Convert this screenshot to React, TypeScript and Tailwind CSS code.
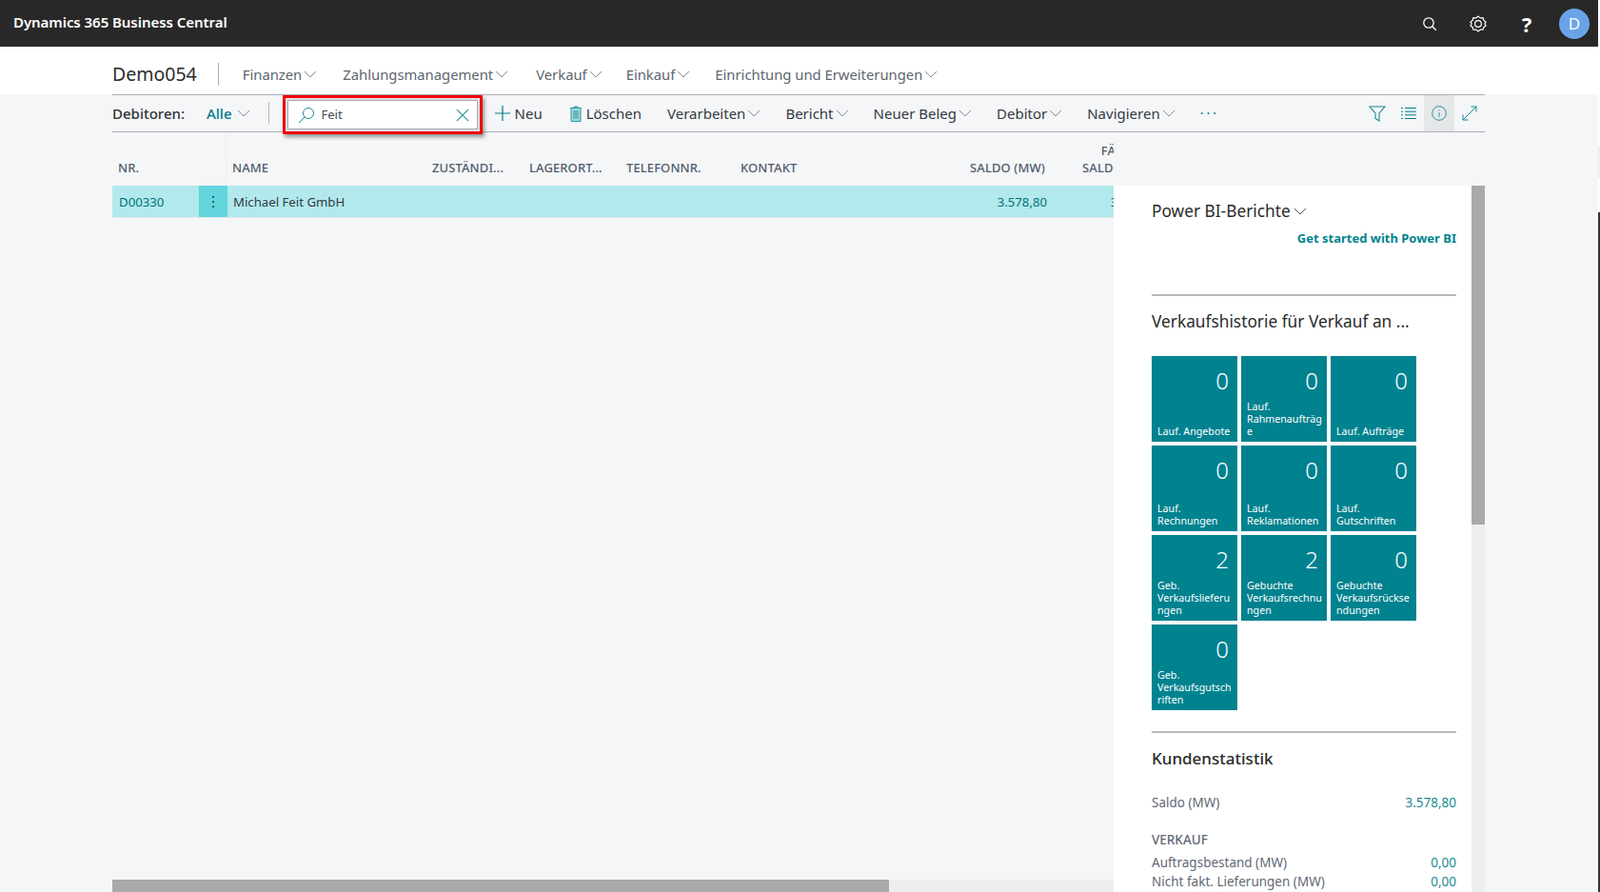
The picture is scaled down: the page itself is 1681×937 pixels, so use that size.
import React from 'react'

const Caret = ({ className = 'text-[#8a8f96]', ml = 'ml-[2px]' }: { className?: string; ml?: string }) => (
  <svg width="14" height="8" viewBox="0 0 14 8" className={`shrink-0 ${ml} ${className}`} fill="none" stroke="currentColor" strokeWidth="1">
    <path d="M1 1l6 6 6-6" />
  </svg>
)

const navItems = [
  { label: 'Finanzen', ml: 'ml-[25px]' },
  { label: 'Zahlungsmanagement', ml: 'ml-[27px]' },
  { label: 'Verkauf', ml: 'ml-[29px]' },
  { label: 'Einkauf', ml: 'ml-[25px]' },
  { label: 'Einrichtung und Erweiterungen', ml: 'ml-[26px]' },
]

const actions = [
  { label: 'Verarbeiten', ml: 'ml-[27px]' },
  { label: 'Bericht', ml: 'ml-[26px]' },
  { label: 'Neuer Beleg', ml: 'ml-[26px]' },
  { label: 'Debitor', ml: 'ml-[26px]' },
  { label: 'Navigieren', ml: 'ml-[26px]' },
]

const tiles = [
  { value: '0', label: 'Lauf. Angebote' },
  { value: '0', label: 'Lauf.\nRahmenaufträg\ne' },
  { value: '0', label: 'Lauf. Aufträge' },
  { value: '0', label: 'Lauf.\nRechnungen' },
  { value: '0', label: 'Lauf.\nReklamationen' },
  { value: '0', label: 'Lauf.\nGutschriften' },
  { value: '2', label: 'Geb.\nVerkaufslieferu\nngen' },
  { value: '2', label: 'Gebuchte\nVerkaufsrechnu\nngen' },
  { value: '0', label: 'Gebuchte\nVerkaufsrückse\nndungen' },
  { value: '0', label: 'Geb.\nVerkaufsgutsch\nriften' },
]

const columns = [
  { label: 'NR.', width: 'flex h-[56px] w-[120px] -mb-[10px] items-end border-r border-[#eceef0] pb-[10px] pl-[6px]' },
  { label: 'NAME', width: 'w-[216px] pl-[6px]' },
  { label: 'ZUSTÄNDI...', width: 'w-[102px]' },
  { label: 'LAGERORT...', width: 'w-[102px]' },
  { label: 'TELEFONNR.', width: 'w-[120px]' },
  { label: 'KONTAKT', width: 'w-[194px]' },
]

function Stat({ label, value, className = '' }: { label: string; value: string; className?: string }) {
  return (
    <div className={`flex justify-between text-[13.5px] leading-[20px] ${className}`}>
      <span className="text-[#5f6875]">{label}</span>
      <span className="text-[#1a8a92]">{value}</span>
    </div>
  )
}

export default function App() {
  return (
    <div className="flex h-[937px] w-[1681px] overflow-hidden bg-white font-['Open_Sans',sans-serif]">
      <div className="flex h-full w-[1679px] flex-col">
        {/* top bar */}
        <header className="flex h-[49px] shrink-0 items-center bg-[#282828] pl-[14px] pr-[9px] text-white">
          <span className="-mt-[2px] text-[15px] font-semibold tracking-[-0.05px]">Dynamics 365 Business Central</span>
          <svg width="16" height="16" viewBox="0 0 16 16" className="ml-auto" fill="none" stroke="currentColor" strokeWidth="1.3">
            <circle cx="7" cy="7" r="5.2" />
            <path d="M10.8 10.8l4 4" />
          </svg>
          <svg width="18" height="18" viewBox="0 0 24 24" className="ml-[34px]" fill="none" stroke="currentColor" strokeWidth="1.6">
            <path d="M12 1.500l3 2.400 3.800-.4 1 3.700 3 2.300-1.600 2.500 1.600 2.500-3 2.400-1 3.400-3.800-.3-3 2.500-3-2.500-3.800.3-1-3.400-3-2.400 1.600-2.500-1.600-2.500 3-2.300 1-3.700 3.800.4z" />
            <circle cx="12" cy="12" r="4.500" />
          </svg>
          <span className="ml-[36px] w-[12px] text-center text-[22px] font-bold leading-none">?</span>
          <span className="ml-[28px] flex h-[32px] w-[32px] items-center justify-center rounded-full bg-[#6ba3e8] text-[17px]">D</span>
        </header>

        {/* company and menus */}
        <nav className="flex h-[50px] shrink-0 items-center bg-white pl-[118px] pt-[8px] text-[14.8px] text-[#5e6570]">
          <span className="text-[19.5px] leading-none text-[#2b2b2b]">Demo054</span>
          <span className="ml-[22px] h-[24px] w-px bg-[#a9adb3]" />
          {navItems.map((item) => (
            <span key={item.label} className={`flex items-center ${item.ml}`}>
              {item.label}
              <Caret />
            </span>
          ))}
        </nav>

        <main className="flex min-h-0 flex-1 flex-col bg-[#f5f6f8] pl-[118px]">
          {/* action bar */}
          <div className="flex h-[40px] w-[1442px] shrink-0 items-center border-y border-[#a9adb5] text-[15px] text-[#333a42]">
            <span className="font-medium text-[#2f3338]">Debitoren:</span>
            <span className="ml-[23px] font-medium text-[#007c86]">Alle</span>
            <Caret ml="ml-[5px]" />
            <span className="ml-[19px] h-[24px] w-px bg-[#b5b9bf]" />
            <div className="z-10 ml-[14px] box-border h-[41px] w-[210px] self-start border-[3px] border-[#f00000] bg-[#eef0f2] p-[2px] shadow-[2px_3px_4px_rgba(0,0,0,0.4)]">
              <div className="flex h-[31px] items-center border border-[#a8adb5] bg-white pl-[10px] pr-[8px] shadow-[0_0_3px_rgba(0,0,0,0.25)]">
                <svg width="18" height="18" viewBox="0 0 18 18" fill="none" stroke="#1a8a92" strokeWidth="1">
                  <circle cx="11" cy="7" r="5.500" />
                  <path d="M7 11l-6 6" />
                </svg>
                <span className="ml-[7px] text-[13px] text-[#444b54]">Feit</span>
                <svg width="14" height="14" viewBox="0 0 14 14" className="ml-auto" fill="none" stroke="#3a9aa2" strokeWidth="1.1">
                  <path d="M1 1l12 12M13 1L1 13" />
                </svg>
              </div>
            </div>
            <svg width="16" height="16" viewBox="0 0 16 16" className="ml-[13px]" fill="none" stroke="#007c86" strokeWidth="1.2">
              <path d="M8 0v16M0 8h16" />
            </svg>
            <span className="ml-[5px]">Neu</span>
            <svg width="14" height="17" viewBox="0 0 14 17" className="ml-[28px]" fill="#a6d8dc" stroke="#2c959d" strokeWidth="1">
              <path d="M5 2.500V1h4v1.500M1 2.500h12M2 2.500v14h10v-14z" />
              <path d="M5 5v9M7 5v9M9 5v9" fill="none" />
            </svg>
            <span className="ml-[4px]">Löschen</span>
            {actions.map((item) => (
              <span key={item.label} className={`flex items-center ${item.ml}`}>
                {item.label}
                <Caret />
              </span>
            ))}
            <span className="ml-[26px] text-[14px] leading-none tracking-[3px] text-[#007c86]">···</span>

            <div className="ml-auto flex h-full items-center">
              <span className="flex h-full w-[33px] items-center justify-center">
                <svg width="18" height="18" viewBox="0 0 18 18" fill="none" stroke="#1a8a92" strokeWidth="1.100">
                  <path d="M1 2h16l-6 7v8l-4-2.500V9z" />
                </svg>
              </span>
              <span className="flex h-full w-[33px] items-center justify-center">
                <svg width="16" height="14" viewBox="0 0 16 14" fill="none" stroke="#007c86" strokeWidth="1">
                  <path d="M0 1.500h2M4 1.500h12M0 5.200h2M4 5.200h12M0 8.800h2M4 8.800h12M0 12.500h2M4 12.500h12" />
                </svg>
              </span>
              <span className="flex h-full w-[32px] items-center justify-center bg-[#e5e7e9]">
                <svg width="16" height="16" viewBox="0 0 16 16" fill="none" stroke="#2c959d" strokeWidth="1">
                  <circle cx="8" cy="8" r="7.300" />
                  <path d="M8 7v5M8 4.200v1.200" />
                </svg>
              </span>
              <span className="flex h-full w-[32px] items-center justify-center">
                <svg width="16" height="16" viewBox="0 0 16 16" fill="none" stroke="#1a8a92" strokeWidth="1">
                  <path d="M1 15L15 1M9.500 1H15v5.500M1 9.500V15h5.500" />
                </svg>
              </span>
            </div>
          </div>

          <div className="flex min-h-0 w-[1442px] flex-1">
            {/* list */}
            <section className="flex w-[1052px] flex-col overflow-hidden">
              <div className="flex h-[56px] shrink-0 items-end pb-[10px] font-['Roboto',sans-serif] text-[13px] font-medium leading-[18px] tracking-[0.1px] text-[#505c6d]">
                {columns.map((col) => (
                  <span key={col.label} className={`shrink-0 whitespace-nowrap ${col.width}`}>
                    {col.label}
                  </span>
                ))}
                <span className="w-[128px] shrink-0 pr-[2px] text-right">SALDO (MW)</span>
                <span className="w-[118px] shrink-0 whitespace-pre-line pr-[2px] text-right">{'FÄLLIGER\nSALDO (MW)'}</span>
              </div>
              <div className="flex h-[34px] shrink-0 items-center border-b border-[#e5e7e9] bg-[#b2e9ec] pt-[2px] text-[13.2px]">
                <span className="w-[91px] shrink-0 pl-[7px] text-[#00737d]">D00330</span>
                <span className="-mt-[2px] flex h-[33px] w-[30px] shrink-0 items-center justify-center bg-[#63d5dd] text-[#1f3d40]">
                  <svg width="4" height="14" viewBox="0 0 4 14" fill="currentColor">
                    <circle cx="2" cy="2" r="1" />
                    <circle cx="2" cy="7" r="1" />
                    <circle cx="2" cy="12" r="1" />
                  </svg>
                </span>
                <span className="w-[733px] shrink-0 pl-[6px] text-[#33393f]">Michael Feit GmbH</span>
                <span className="w-[128px] shrink-0 text-right text-[#00737d]">3.578,80</span>
                <span className="w-[119px] shrink-0 text-right text-[#00737d]">3.578,80</span>
              </div>
              <div className="flex-1" />
              <div className="h-[13px] shrink-0 bg-[#eeeeee]">
                <div className="h-full w-[816px] bg-[#a9a9a9]" />
              </div>
            </section>

            {/* fact box */}
            <aside className="mt-[56px] flex w-[376px] flex-col overflow-hidden bg-white pl-[40px] pr-[16px]">
              <div className="mt-[15px] flex h-[24px] items-center text-[17.3px] text-[#2b2b2b]">
                Power BI-Berichte
                <Caret className="text-[#555]" ml="ml-[3px]" />
              </div>
              <a className="mt-[6px] text-right text-[13px] font-bold leading-[20px] text-[#00838f]">Get started with Power BI</a>
              <div className="mt-[49px] h-[2px] shrink-0 bg-[#b5b9bf]" />
              <h3 className="mt-[15px] text-[17.3px] leading-[24px] text-[#2b2b2b]">Verkaufshistorie für Verkauf an ...</h3>
              <div className="mt-[24px] grid shrink-0 grid-cols-[repeat(3,90px)] gap-[4px]">
                {tiles.map((tile) => (
                  <div key={tile.label} className="flex h-[90px] flex-col justify-between bg-[#00828f] pb-[4px] pl-[6px] pr-[4px] pt-[10px] text-white">
                    <span className="pr-[5px] text-right text-[24px] font-light leading-[32px]">{tile.value}</span>
                    <span className="whitespace-pre-line text-[10.7px] leading-[13px]">{tile.label}</span>
                  </div>
                ))}
              </div>
              <div className="mt-[22px] h-[2px] shrink-0 bg-[#b5b9bf]" />
              <h3 className="mt-[15px] text-[17px] font-medium leading-[24px] text-[#2b2b2b]">Kundenstatistik</h3>
              <Stat className="mt-[24px]" label="Saldo (MW)" value="3.578,80" />
              <div className="mt-[18px] text-[13.5px] font-medium leading-[22px] text-[#5f6875]">VERKAUF</div>
              <Stat className="mt-[3px]" label="Auftragsbestand (MW)" value="0,00" />
              <Stat label="Nicht fakt. Lieferungen (MW)" value="0,00" />
            </aside>

            <div className="mt-[56px] w-[14px] shrink-0 bg-[#eeeeee]">
              <div className="h-[356px] bg-[#a9a9a9]" />
            </div>
          </div>
        </main>
      </div>

      {/* window edge */}
      <div className="flex h-full w-[2px] flex-col bg-white">
        <div className="mt-[153px] h-[34px] bg-[#eeeeee]" />
        <div className="mt-[36px] flex-1 bg-[#333333]" />
      </div>
    </div>
  )
}
